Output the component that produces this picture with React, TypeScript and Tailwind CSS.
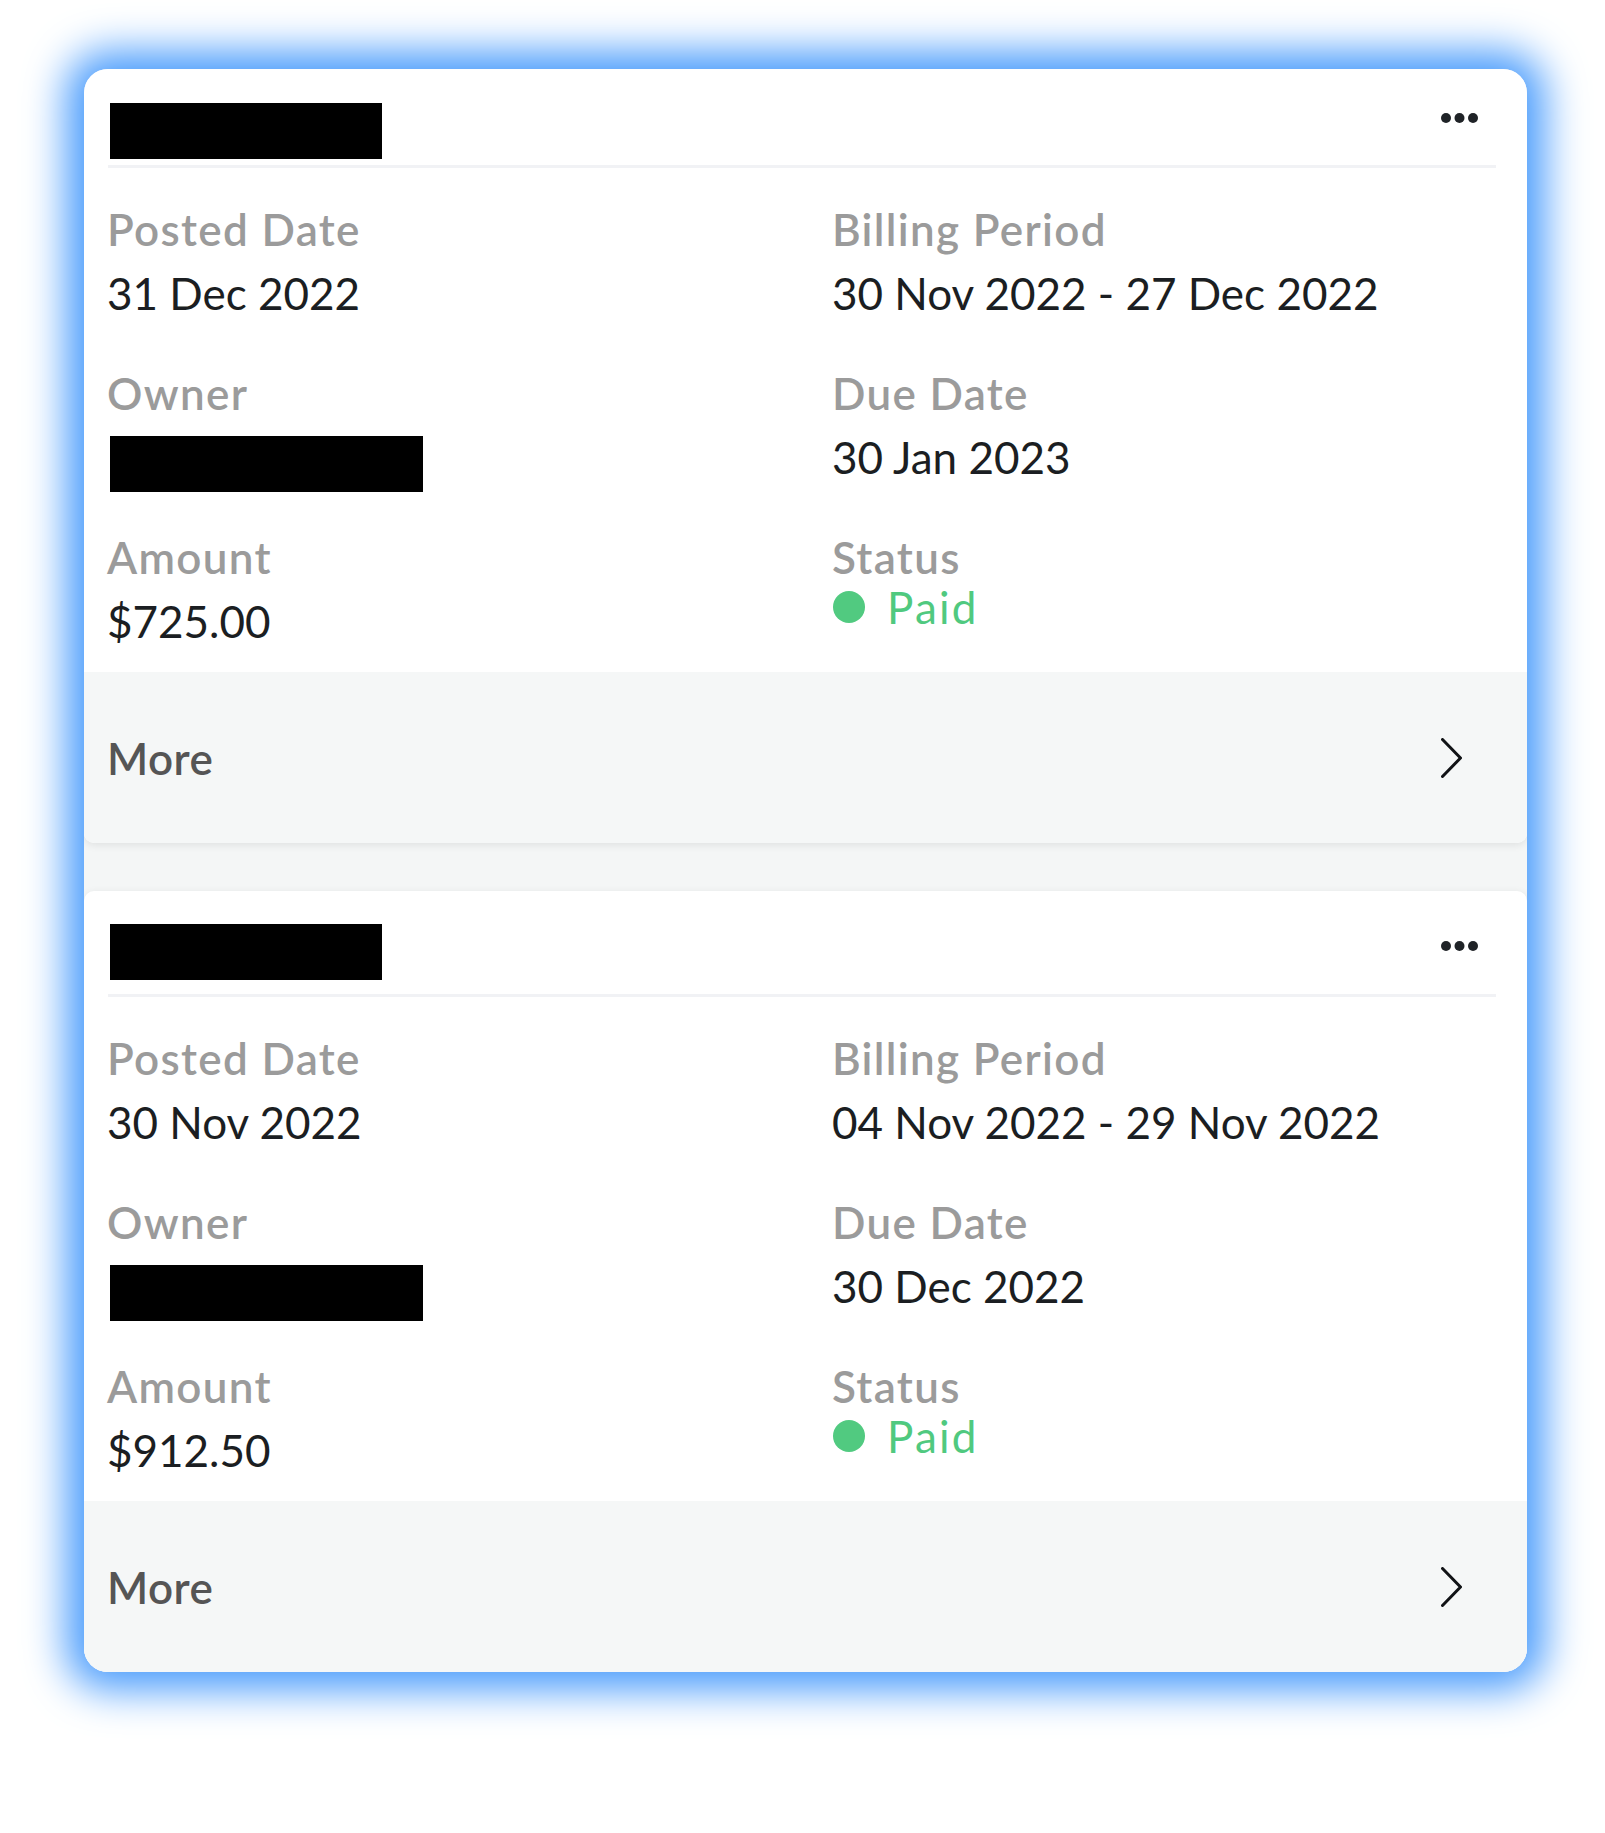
import React from "react";

type Bill = {
  posted: string;
  period: string;
  due: string;
  amount: string;
  headerPt: string;
  dividerMt: string;
  dotsMt: string;
};

const bills: Bill[] = [
  {
    posted: "31 Dec 2022",
    period: "30 Nov 2022 - 27 Dec 2022",
    due: "30 Jan 2023",
    amount: "$725.00",
    headerPt: "pt-[34px]",
    dividerMt: "mt-[6px]",
    dotsMt: "mt-[10px]",
  },
  {
    posted: "30 Nov 2022",
    period: "04 Nov 2022 - 29 Nov 2022",
    due: "30 Dec 2022",
    amount: "$912.50",
    headerPt: "pt-[33px]",
    dividerMt: "mt-[14px]",
    dotsMt: "mt-[17px]",
  },
];

function Dots() {
  return (
    <svg width="37" height="10" viewBox="0 0 37 10" className="block">
      <circle cx="5" cy="5" r="5" fill="#1f2327" />
      <circle cx="18.5" cy="5" r="5" fill="#1f2327" />
      <circle cx="32" cy="5" r="5" fill="#1f2327" />
    </svg>
  );
}

function Chevron() {
  return (
    <svg width="21" height="40" viewBox="0 0 21 40" className="block">
      <polyline
        points="1.5,1.5 19.5,20 1.5,38.5"
        fill="none"
        stroke="#111316"
        strokeWidth="3"
        strokeLinecap="round"
        strokeLinejoin="round"
      />
    </svg>
  );
}

function Label({ children }: { children: React.ReactNode }) {
  return (
    <div className="text-[44px] leading-[64px] font-semibold tracking-[0.03em] text-[#9b9b9b]">
      {children}
    </div>
  );
}

function Value({ children }: { children: React.ReactNode }) {
  return (
    <div className="text-[44px] leading-[64px] text-[#1b1e22] whitespace-nowrap">
      {children}
    </div>
  );
}

function Card({ bill }: { bill: Bill }) {
  return (
    <div className="bg-white rounded-[10px] shadow-[0_2px_8px_rgba(0,0,0,0.09)] overflow-hidden">
      <div className={`flex justify-between pl-[26px] pr-[49px] ${bill.headerPt}`}>
        <div className="w-[272px] h-[56px] bg-black" />
        <div className={bill.dotsMt}>
          <Dots />
        </div>
      </div>
      <div className={`ml-[24px] mr-[31px] h-[3px] bg-[#f1f2f5] ${bill.dividerMt}`} />
      <div className="grid grid-cols-[725px_1fr] items-start gap-y-[36px] pl-[23px] pt-[28.5px] pb-[19.5px]">
        <div>
          <Label>Posted Date</Label>
          <Value>{bill.posted}</Value>
        </div>
        <div>
          <Label>Billing Period</Label>
          <Value>{bill.period}</Value>
        </div>
        <div>
          <Label>Owner</Label>
          <div className="h-[64px] pt-[11px] pl-[3px]">
            <div className="w-[313px] h-[56px] bg-black" />
          </div>
        </div>
        <div>
          <Label>Due Date</Label>
          <Value>{bill.due}</Value>
        </div>
        <div>
          <Label>Amount</Label>
          <Value>{bill.amount}</Value>
        </div>
        <div>
          <Label>Status</Label>
          <div className="flex items-center gap-[22px] ml-[1px] text-[44px] leading-[36px] text-[#50c97f]">
            <span className="block w-[32px] h-[32px] rounded-full bg-[#51ca80]" />
            <span className="tracking-[0.05em]">Paid</span>
          </div>
        </div>
      </div>
      <div className="h-[171px] bg-[#f5f7f7] flex items-center justify-between pl-[23px] pr-[65px]">
        <span className="text-[44px] leading-[64px] font-semibold tracking-[0.01em] text-[#555555]">More</span>
        <Chevron />
      </div>
    </div>
  );
}

export default function App() {
  return (
    <div
      className="min-h-[1833px] w-[1605px] bg-white pt-[69px] pl-[84px]"
      style={{ fontFamily: "Lato, 'Noto Sans', sans-serif" }}
    >
      <div className="w-[1443px] rounded-[24px] overflow-hidden bg-[#f4f6f6] shadow-[0_0_40px_18px_#4a9cfc] flex flex-col gap-[48px]">
        {bills.map((b, i) => (
          <Card key={i} bill={b} />
        ))}
      </div>
    </div>
  );
}
